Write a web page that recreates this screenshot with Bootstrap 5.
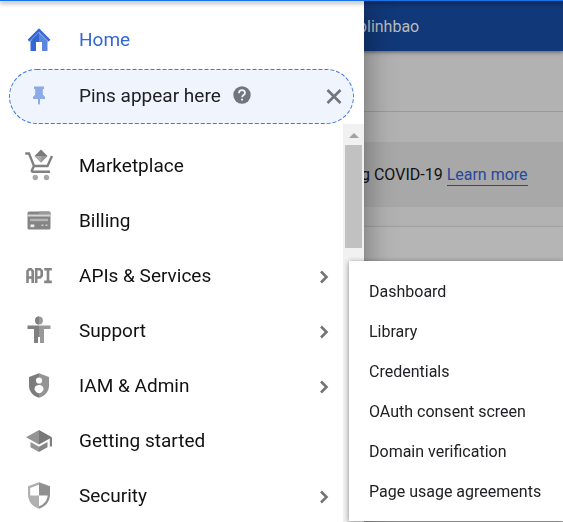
<!DOCTYPE html>
<html lang="en">
<head>
<meta charset="utf-8">
<meta name="viewport" content="width=device-width, initial-scale=1">
<title>Cloud Console</title>
<link href="https://cdn.jsdelivr.net/npm/bootstrap@5.3.0/dist/css/bootstrap.min.css" rel="stylesheet">
<style>
  body { font-family: Roboto, "Liberation Sans", sans-serif; background: #b2b2b2; color: #111; }
  .shell { height: 100vh; border-top: 1px solid #1a73e8; }
  .topbar { height: 50px; padding-left: 358px; padding-top: 2px; background: #113878; color: #bcbcbc; font-size: 16px; box-shadow: 0 1px 4px rgba(0,0,0,.5); }
  .toolbar-strip { height: 61px; border-bottom: 1px solid #999; }
  .notice { height: 65px; margin-top: 30px; padding-left: 361px; background: #a8a8a8; font-size: 16px; white-space: nowrap; }
  .notice a { color: #27479b; text-decoration: none; border-bottom: 1px solid #27479b; padding-bottom: 1px; }
  .panel { margin-top: 20px; background: #b5b5b5; box-shadow: 0 0 2px rgba(0,0,0,.3); }
  .drawer { width: 364px; background: #fff; box-shadow: 0 8px 10px -5px rgba(0,0,0,.2), 0 16px 24px 2px rgba(0,0,0,.14), 0 6px 30px 5px rgba(0,0,0,.2); }
  .edge { height: 1px; background: #1a73e8; box-shadow: 0 1px 5px 1px rgba(0,0,0,.4); z-index: 2; }
  .entry { height: 55px; padding-left: 23px; padding-right: 13px; gap: 24px; font-size: 19px; color: #111; text-decoration: none; }
  .entry > svg { width: 32px; height: 32px; flex: none; overflow: visible; }
  .entry .chev { width: 12px; height: 16px; margin-left: auto; }
  .home { margin-top: 13px; color: #3367d6; }
  .pins { position: relative; height: 55px; margin: 1px 10px 0 9px; padding-left: 14px; padding-right: 11px; gap: 24px; font-size: 19px; color: #202124; background: #eff4fd; }
  .pins .outline { position: absolute; inset: 0; width: 100%; height: 100%; }
  .pins > * { position: relative; }
  .plain { border: 0; padding: 0; background: none; line-height: 0; }
  .pins, .pins .outline { border-radius: 28px; }
  .list-area { min-height: 0; }
  .entries { padding-top: 15px; }
  .track { width: 21px; padding: 9px 2px 0; gap: 7px; background: #f1f1f1; }
  .thumb { width: 17px; height: 103px; background: #c1c1c1; }
  .flyout { top: 261px; left: 349px; right: 0; padding: 11px 0 9px; background: #fff; box-shadow: 0 1px 5px rgba(0,0,0,.45); z-index: 3; }
  .flyout a { height: 40px; padding-left: 20px; font-size: 16px; color: #202124; text-decoration: none; white-space: nowrap; }
</style>
<script src="https://cdn.jsdelivr.net/npm/bootstrap@5.3.0/dist/js/bootstrap.bundle.min.js"></script>
</head>
<body class="overflow-hidden">
<div class="shell d-flex flex-column position-relative">
  <header class="topbar d-flex align-items-center flex-shrink-0">plinhbao</header>
  <div class="toolbar-strip flex-shrink-0"></div>
  <div class="notice d-flex align-items-center flex-shrink-0"><span>g COVID-19 <a href="#">Learn more</a></span></div>
  <div class="panel flex-grow-1"></div>
</div>

<nav class="drawer position-fixed top-0 start-0 bottom-0 d-flex flex-column" aria-label="Main menu">
  <a href="#" class="entry home d-flex align-items-center flex-shrink-0">
    <svg viewBox="0 0 32 32" aria-hidden="true">
      <path d="M16 6 7.500 14v12H13v-9h3z" fill="#3367d6"/>
      <path d="M16 6l8.500 8v12H19v-9h-3z" fill="#5c85de"/>
      <path d="M6 16 16 6.500 26 16" fill="none" stroke="#85a4e6" stroke-width="3"/>
      <path d="M5.500 15.500 16 5 26.500 15.500" fill="none" stroke="#3367d6" stroke-width="2.400"/>
      <path d="M16 7.500 9 14.500v2.500h7z" fill="#3367d6"/>
    </svg>
    <span>Home</span>
  </a>
  <div class="pins d-flex align-items-center flex-shrink-0">
    <svg class="outline" aria-hidden="true"><rect x="0" y="0" width="100%" height="100%" rx="27.500" fill="none" stroke="#3f78e0" stroke-width="2" stroke-dasharray="4 2"/></svg>
    <svg width="32" height="32" viewBox="0 0 32 32" aria-hidden="true"><path d="M11 5.500h10V8h-1.200v5.500L22 16v2h-5v4.500l-1 1.500-1-1.500V18h-5v-2l2.200-2.500V8H11z" fill="#8caae8"/></svg>
    <div class="d-flex align-items-center flex-grow-1">
      <span>Pins appear here</span>
      <button type="button" class="plain ms-2 mb-1 px-1" aria-label="Help">
        <svg width="18" height="18" viewBox="0 0 18 18"><circle cx="9" cy="9" r="8.700" fill="#73757c"/><path d="M6 7.200C6 5.300 7.300 4.200 9 4.200s3 1.100 3 2.700c0 2-2.900 2.300-2.900 4.300" fill="none" stroke="#eff4fd" stroke-width="1.800"/><path d="M8.100 12.700h1.900v1.900H8.100z" fill="#eff4fd"/></svg>
      </button>
    </div>
    <button type="button" class="plain" aria-label="Close">
      <svg width="18" height="18" viewBox="0 0 18 18"><path d="M2.500 2l13 13M15.500 2l-13 13" stroke="#73757c" stroke-width="2.600" fill="none"/></svg>
    </button>
  </div>

  <div class="list-area d-flex flex-grow-1 overflow-hidden">
    <div class="entries flex-grow-1">
      <a href="#" class="entry d-flex align-items-center">
        <svg viewBox="0 0 32 32" aria-hidden="true">
          <path d="M18 -1.500 24.500 5 18 11.500 11.500 5z" fill="#7b7b7b"/><path d="M18 5h6.500L18 11.500z" fill="#999"/><path d="M18 5h-6.500L18 11.500z" fill="#ababab"/>
          <path d="M2.300 2.500H6L11 15H24.500L29 5" fill="none" stroke="#808080" stroke-width="2.300"/>
          <path d="M11 15 8.800 19.500Q8.500 20.700 10 20.700H27" fill="none" stroke="#808080" stroke-width="2.400"/>
          <circle cx="12.300" cy="26.500" r="2.700" fill="#a8a8a8"/><circle cx="23.500" cy="26.500" r="2.700" fill="#a8a8a8"/>
        </svg>
        <span>Marketplace</span>
      </a>
      <a href="#" class="entry d-flex align-items-center">
        <svg viewBox="0 0 32 32" aria-hidden="true">
          <rect x="4.500" y="5.500" width="23" height="18" rx="1.500" fill="#858585"/>
          <path d="M16 5.500h10q1.500 0 1.500 1.500v1.500H16z" fill="#999"/>
          <path d="M4.500 8.500h23v2h-23z" fill="#d5d5d5"/><path d="M7 12.800h18v2.400H7z" fill="#b5b5b5"/>
          <path d="M7.500 18.500h3.800v2.700H7.500z" fill="#eee"/><path d="M18.500 18.500h2v1.500h-2zM22.500 18.500h2v1.500h-2z" fill="#ccc"/>
        </svg>
        <span>Billing</span>
      </a>
      <a href="#" class="entry d-flex align-items-center">
        <svg viewBox="0 0 32 32" aria-hidden="true" fill="none" stroke="#858585" stroke-width="2.600">
          <path d="M4.500 22V10.200L6.200 8.200H8L9.700 10.200V22M4.500 16.500H9.700M13.200 22V8.200H17L18.700 10V14.700L17 16.500H13.200M21.200 8.200H28.800M25 8.200V20.900M21.200 20.900H28.800"/>
        </svg>
        <span>APIs &amp; Services</span>
        <svg class="chev" viewBox="0 0 12 16" aria-hidden="true"><path d="M3 2.500 8.500 8 3 13.500" fill="none" stroke="#757575" stroke-width="2.600"/></svg>
      </a>
      <a href="#" class="entry d-flex align-items-center">
        <svg viewBox="0 0 32 32" aria-hidden="true">
          <circle cx="16" cy="4.500" r="3.900" fill="#999"/><path d="M16 .6a3.900 3.900 0 0 0 0 7.800z" fill="#808080"/>
          <path d="M16 9.500H4.500V13H11v14h4v-6h1z" fill="#808080"/><path d="M16 9.500h11.500V13H21v14h-4v-6h-1z" fill="#999"/>
        </svg>
        <span>Support</span>
        <svg class="chev" viewBox="0 0 12 16" aria-hidden="true"><path d="M3 2.500 8.500 8 3 13.500" fill="none" stroke="#757575" stroke-width="2.600"/></svg>
      </a>
      <a href="#" class="entry d-flex align-items-center">
        <svg viewBox="0 0 32 32" aria-hidden="true">
          <path d="M16 2.300 6 6v8.500c0 6 4 10.500 10 12.200z" fill="#7c7c7c"/><path d="M16 2.300 26 6v8.500c0 6-4 10.500-10 12.200z" fill="#949494"/>
          <circle cx="16" cy="9.500" r="3.100" fill="#fff"/><path d="M11.500 18.300c0-3 1.800-4.300 4.500-4.300s4.500 1.300 4.500 4.300c-1 2.500-2.500 4-4.500 4s-3.500-1.500-4.500-4z" fill="#fff"/>
        </svg>
        <span>IAM &amp; Admin</span>
        <svg class="chev" viewBox="0 0 12 16" aria-hidden="true"><path d="M3 2.500 8.500 8 3 13.500" fill="none" stroke="#757575" stroke-width="2.600"/></svg>
      </a>
      <a href="#" class="entry d-flex align-items-center">
        <svg viewBox="0 0 32 32" aria-hidden="true">
          <path d="M16 4 3 11.200l13 7.300z" fill="#949494"/><path d="M16 4l13 7.200-13 7.300z" fill="#787878"/>
          <path d="M7.500 16l8.500 4.800V26l-8.500-4.800z" fill="#949494"/><path d="M24.500 16 16 20.800V26l8.500-4.800z" fill="#858585"/><path d="M26.800 12 29 11.200V20.500h-2.200z" fill="#808080"/>
        </svg>
        <span>Getting started</span>
      </a>
      <a href="#" class="entry d-flex align-items-center">
        <svg viewBox="0 0 32 32" aria-hidden="true">
          <path d="M16 1.300 5 5.200V13c0 7.500 4.500 12.700 11 14.700z" fill="#b0b0b0"/><path d="M16 1.300 27 5.200V13c0 7.500-4.500 12.700-11 14.700z" fill="#909090"/>
          <path d="M16 3.800 7.200 7v7.500H16z" fill="#fff"/><path d="M16 14.500h8.700C24 20 20.700 23.700 16 25.200z" fill="#fff"/>
        </svg>
        <span>Security</span>
        <svg class="chev" viewBox="0 0 12 16" aria-hidden="true"><path d="M3 2.500 8.500 8 3 13.500" fill="none" stroke="#757575" stroke-width="2.600"/></svg>
      </a>
    </div>
    <div class="track d-flex flex-column align-items-center flex-shrink-0" aria-hidden="true">
      <svg width="10" height="5" viewBox="0 0 10 5"><path d="M5 0l5 5H0z" fill="#a3a3a3"/></svg>
      <div class="thumb"></div>
    </div>
  </div>
</nav>

<div class="edge position-fixed top-0 start-0 end-0"></div>

<nav class="flyout position-absolute d-flex flex-column" aria-label="APIs &amp; Services">
  <a href="#" class="d-flex align-items-center">Dashboard</a>
  <a href="#" class="d-flex align-items-center">Library</a>
  <a href="#" class="d-flex align-items-center">Credentials</a>
  <a href="#" class="d-flex align-items-center">OAuth consent screen</a>
  <a href="#" class="d-flex align-items-center">Domain verification</a>
  <a href="#" class="d-flex align-items-center">Page usage agreements</a>
</nav>
</body>
</html>
